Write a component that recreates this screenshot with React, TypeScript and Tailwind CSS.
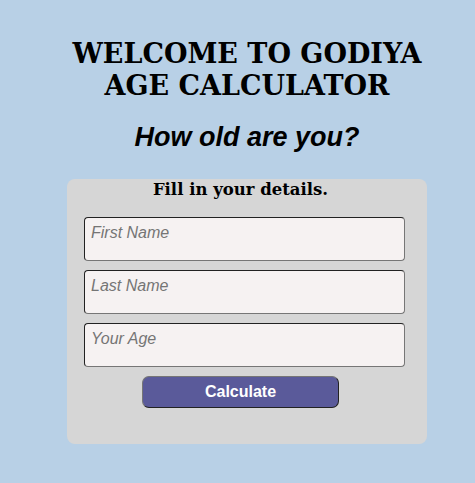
export default function App() {
  return (
    <div className="min-h-[483px] w-full bg-[#b8d0e6] pt-[21px]">
      <div className="flex flex-col items-center pl-[19px]">
        <h1 className="mt-[17px] text-center font-['DejaVu_Serif',serif] text-[27px] font-bold leading-[32px] text-black">
          WELCOME TO GODIYA
          <br />
          AGE CALCULATOR
        </h1>
        <h2 className="mt-[20px] font-['Liberation_Sans',Arial,sans-serif] text-[27px] font-bold italic leading-[30px] text-black">
          How old are you?
        </h2>
        <div className="mt-[27px] flex h-[265px] w-[360px] flex-col items-center rounded-[8px] bg-[#d6d6d6] pr-[13px]">
          <p className="font-['DejaVu_Serif',serif] text-[16.5px] font-bold leading-[22px] text-black">
            Fill in your details.
          </p>
          <div className="mt-[16px] flex flex-col gap-[9px] self-start pl-[17px]">
            {['First Name', 'Last Name', 'Your Age'].map((p) => (
              <input
                key={p}
                placeholder={p}
                className="h-[44px] w-[321px] rounded-[4px] border border-t-[#222] border-l-[#222] border-r-[#767676] border-b-[#767676] bg-[#f6f2f2] px-[6px] pb-[12px] font-['Liberation_Sans',Arial,sans-serif] text-[16px] italic text-black placeholder:text-[#757575] outline-none"
              />
            ))}
          </div>
          <button className="mt-[9px] h-[32px] w-[197px] rounded-[7px] border border-t-[#767676] border-l-[#767676] border-r-[#222] border-b-[#222] bg-[#5a5a9a] font-['Liberation_Sans',Arial,sans-serif] text-[16px] font-bold text-white">
            Calculate
          </button>
        </div>
      </div>
    </div>
  );
}
